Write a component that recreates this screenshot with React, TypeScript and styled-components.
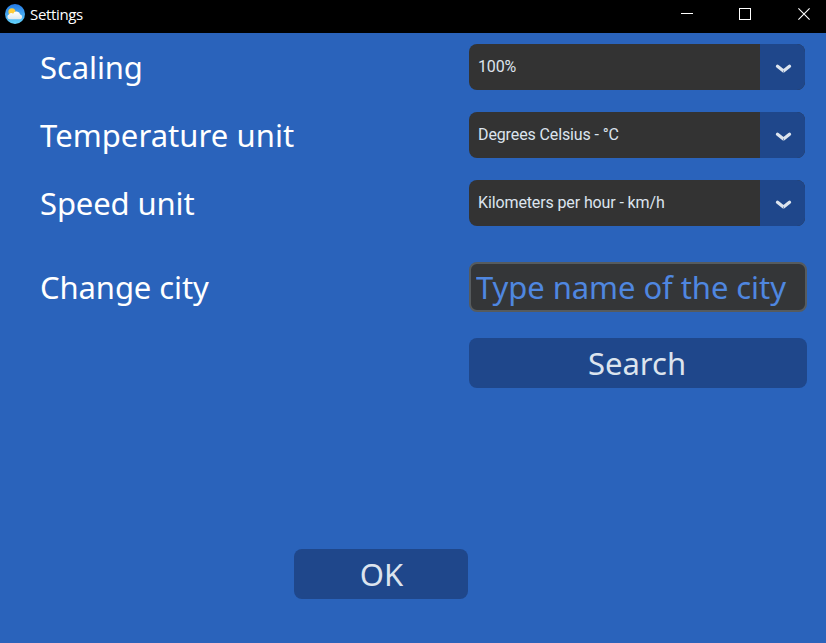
import React from "react";
import styled, { createGlobalStyle } from "styled-components";

const GlobalStyle = createGlobalStyle`
  html, body { margin: 0; padding: 0; background: #2a63bb; overflow: hidden; }
  *, *::before, *::after { box-sizing: border-box; }
`;

const Window = styled.div`
  display: flex;
  flex-direction: column;
  width: 826px;
  height: 643px;
  overflow: hidden;
  background: #2a63bb;
  font-family: "Noto Sans", sans-serif;
`;

const TitleBar = styled.header`
  display: flex;
  align-items: flex-start;
  flex: none;
  height: 33px;
  padding-left: 4px;
  background: #000;
  color: #fff;
`;

const AppIcon = styled.svg`
  display: block;
  width: 21px;
  height: 21px;
  margin-top: 4px;
`;

const Title = styled.h1`
  margin: 4px 0 0 5px;
  font: 400 15px/20px "Open Sans", sans-serif;
  letter-spacing: -0.35px;
`;

const WindowControls = styled.div`
  display: flex;
  margin-left: auto;
  margin-right: -7px;
`;

const ControlButton = styled.button`
  display: flex;
  justify-content: center;
  width: 58.5px;
  height: 33px;
  padding: 8px 0 0;
  border: 0;
  background: transparent;
  color: #fff;
`;

const Form = styled.main`
  display: flex;
  flex-direction: column;
  flex: 1;
  padding-top: 11px;
`;

const Row = styled.div<{ $height: number; $gap: number }>`
  display: grid;
  grid-template-columns: 429px 338px;
  align-items: center;
  height: ${(p) => p.$height}px;
  margin: 0 0 ${(p) => p.$gap}px 40px;
`;

const Label = styled.label<{ $tracking?: number }>`
  color: #fff;
  font-size: 31px;
  line-height: 46px;
  letter-spacing: ${(p) => p.$tracking ?? 0}px;
  white-space: nowrap;
`;

const Select = styled.div`
  display: flex;
  width: 336px;
  height: 46px;
  overflow: hidden;
  border-radius: 8px;
  background: #333;
`;

const SelectValue = styled.span`
  flex: 1;
  padding-left: 9px;
  color: #dce4ee;
  font: 400 16px/45px Roboto, sans-serif;
  letter-spacing: -0.12px;
  white-space: nowrap;
`;

const SelectArrow = styled.span`
  display: flex;
  width: 45px;
  padding: 19px 0 0 15px;
  background: #1f478b;
`;

const CityInput = styled.input`
  width: 338px;
  height: 50px;
  padding: 0 0 0 5px;
  border: 2px solid #565b5e;
  border-radius: 8px;
  outline: 0;
  background: #343638;
  font: 400 31px "Noto Sans", sans-serif;
  letter-spacing: -0.07px;
  &::placeholder {
    color: #4f87e0;
    opacity: 1;
  }
`;

const Button = styled.button<{ $width: number; $left: number; $shift?: number }>`
  flex: none;
  width: ${(p) => p.$width}px;
  height: 50px;
  margin-left: ${(p) => p.$left}px;
  padding: 0;
  border: 0;
  border-radius: 8px;
  background: #1f478b;
  color: #dce4ee;
  font: 400 31px/50px "Noto Sans", sans-serif;
  text-indent: ${(p) => p.$shift ?? 0}px;
`;

const Footer = styled.footer`
  display: flex;
  margin-top: auto;
  margin-bottom: 44px;
`;

const settings = [
  { label: "Scaling", value: "100%", gap: 22, tracking: -0.1 },
  { label: "Temperature unit", value: "Degrees Celsius - °C", gap: 22, tracking: 0.06 },
  { label: "Speed unit", value: "Kilometers per hour - km/h", gap: 36, tracking: -0.12 },
];

function WeatherIcon() {
  return (
    <AppIcon viewBox="0 0 21 21" aria-hidden="true">
      <defs>
        <linearGradient id="sky" x1="0" y1="0" x2="0" y2="1">
          <stop offset="0" stopColor="#2478e4" />
          <stop offset="1" stopColor="#63d3fb" />
        </linearGradient>
        <linearGradient id="cloud" x1="0" y1="0" x2="0" y2="1">
          <stop offset="0" stopColor="#fff" />
          <stop offset="1" stopColor="#dfe7ec" />
        </linearGradient>
      </defs>
      <circle cx="11" cy="10" r="10" fill="url(#sky)" />
      <circle cx="7.9" cy="7.7" r="3.5" fill="#ffcb38" />
      <path
        d="M5.8 15.3a2.6 2.6 0 0 1-.5-5.1 2.4 2.4 0 0 1 3.8-.4 3.7 3.7 0 0 1 7.1.8 2.4 2.4 0 0 1 0 4.7Z"
        fill="url(#cloud)"
      />
    </AppIcon>
  );
}

function Chevron() {
  return (
    <svg width="17" height="12" viewBox="0 0 17 12" aria-hidden="true">
      <path d="M2.5 3.3 8.5 8l6-4.7" fill="none" stroke="#dce4ee" strokeWidth="3.3" strokeLinecap="round" strokeLinejoin="round" />
      <path d="M8.5 7.6v2" stroke="#1f478b" strokeWidth="1" opacity=".5" />
    </svg>
  );
}

export default function App() {
  return (
    <>
      <GlobalStyle />
      <Window>
        <TitleBar>
          <WeatherIcon />
          <Title>Settings</Title>
          <WindowControls>
            <ControlButton aria-label="Minimize">
              <svg width="12" height="12" shapeRendering="crispEdges">
                <path d="M0 5.5h12" stroke="currentColor" />
              </svg>
            </ControlButton>
            <ControlButton aria-label="Maximize">
              <svg width="12" height="12" shapeRendering="crispEdges">
                <rect x=".5" y=".5" width="11" height="11" fill="none" stroke="currentColor" />
              </svg>
            </ControlButton>
            <ControlButton aria-label="Close">
              <svg width="12" height="12">
                <path d="m.4.4 11.2 11.2m0-11.2L.4 11.6" stroke="currentColor" strokeWidth="1.1" />
              </svg>
            </ControlButton>
          </WindowControls>
        </TitleBar>
        <Form>
          {settings.map((s) => (
            <Row key={s.label} $height={46} $gap={s.gap}>
              <Label $tracking={s.tracking}>{s.label}</Label>
              <Select>
                <SelectValue>{s.value}</SelectValue>
                <SelectArrow>
                  <Chevron />
                </SelectArrow>
              </Select>
            </Row>
          ))}
          <Row $height={50} $gap={26}>
            <Label htmlFor="city" $tracking={-0.1}>Change city</Label>
            <CityInput id="city" placeholder="Type name of the city" />
          </Row>
          <Button $width={338} $left={469} $shift={-2}>Search</Button>
          <Footer>
            <Button $width={174} $left={294} $shift={1}>OK</Button>
          </Footer>
        </Form>
      </Window>
    </>
  );
}
